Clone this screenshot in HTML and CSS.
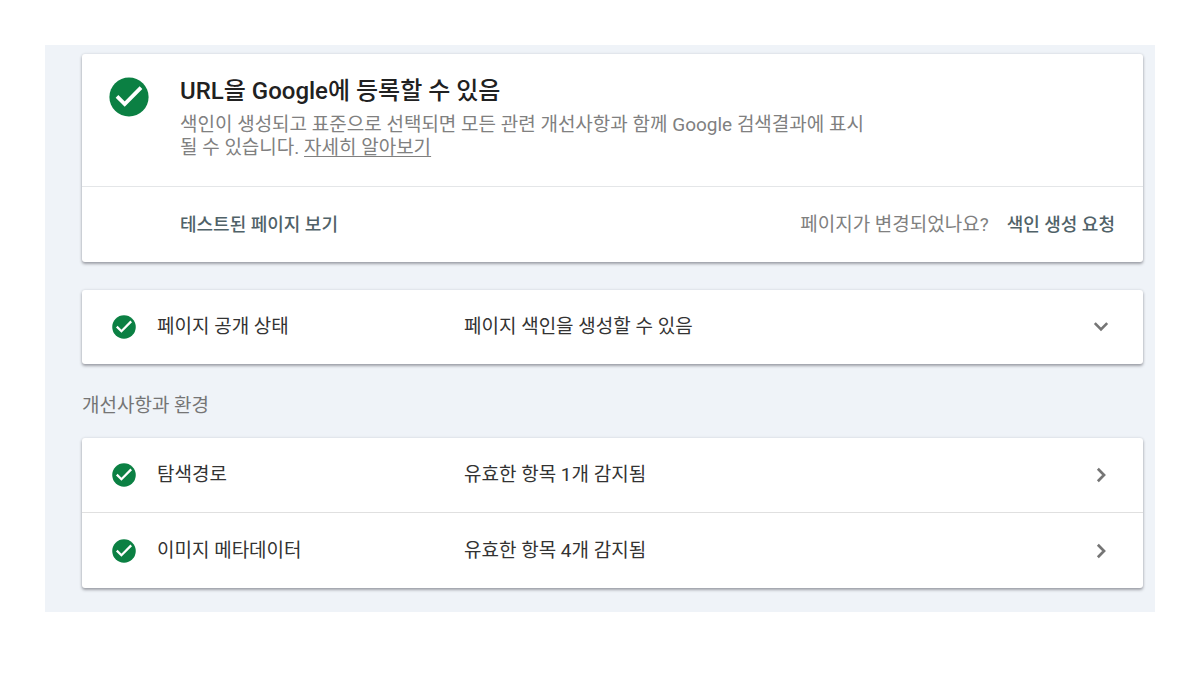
FILE: index.html
```html
<!DOCTYPE html>
<html lang="ko">
<head>
<meta charset="utf-8">
<meta name="viewport" content="width=device-width, initial-scale=1">
<title>URL 검사</title>
<link rel="stylesheet" href="styles.css">
</head>
<body>
<svg class="defs" aria-hidden="true">
  <symbol id="check" viewBox="2 2 20 20"><circle cx="12" cy="12" r="9.8" fill="#0b8043"/><path d="M6 11.700L9.850 15.500 18 7.300" fill="none" stroke="#fff" stroke-width="1.900"/></symbol>
  <symbol id="right" viewBox="0 0 24 24"><path d="M9.300 6.700L14.600 12 9.300 17.300" fill="none" stroke="#757575" stroke-width="2.300"/></symbol>
  <symbol id="down" viewBox="0 0 24 24"><path d="M6.700 8.700L12 14 17.300 8.700" fill="none" stroke="#757575" stroke-width="2.300"/></symbol>
</svg>
<main class="panel">
  <section class="card">
    <div class="verdict">
      <svg class="check check-large" aria-hidden="true"><use href="#check"/></svg>
      <div>
        <h1 class="title">URL을 Google에 등록할 수 있음</h1>
        <p class="description">색인이 생성되고 표준으로 선택되면 모든 관련 개선사항과 함께 Google 검색결과에 표시될 수 있습니다. <a class="more" href="#">자세히 알아보기</a></p>
      </div>
    </div>
    <div class="actions">
      <button class="action" type="button">테스트된 페이지 보기</button>
      <div class="request">
        <span>페이지가 변경되었나요?</span>
        <button class="action" type="button">색인 생성 요청</button>
      </div>
    </div>
  </section>
  <section class="card status">
    <button class="row" type="button">
      <svg class="check" aria-hidden="true"><use href="#check"/></svg>
      <span>페이지 공개 상태</span>
      <span>페이지 색인을 생성할 수 있음</span>
      <svg class="chevron" aria-hidden="true"><use href="#down"/></svg>
    </button>
  </section>
  <h2 class="group">개선사항과 환경</h2>
  <section class="card">
    <button class="row" type="button">
      <svg class="check" aria-hidden="true"><use href="#check"/></svg>
      <span>탐색경로</span>
      <span>유효한 항목 1개 감지됨</span>
      <svg class="chevron" aria-hidden="true"><use href="#right"/></svg>
    </button>
    <button class="row" type="button">
      <svg class="check" aria-hidden="true"><use href="#check"/></svg>
      <span>이미지 메타데이터</span>
      <span>유효한 항목 4개 감지됨</span>
      <svg class="chevron" aria-hidden="true"><use href="#right"/></svg>
    </button>
  </section>
</main>
</body>
</html>
```
FILE: styles.css
```css
* { box-sizing: border-box; }
body {
  margin: 0;
  padding: 45px;
  background: #fff;
  color: #333;
  font: 19px/24px Roboto, "Noto Sans CJK KR", sans-serif;
}
.defs { position: absolute; width: 0; height: 0; }
.panel { padding: 9px 12px 24px 37px; background: #eff3f8; }
.card {
  background: #fff;
  border-radius: 3px;
  box-shadow: 0 2px 3px rgba(40, 40, 50, .38), 0 0 3px rgba(40, 40, 50, .12);
}
.verdict {
  display: grid;
  grid-template-columns: 71px minmax(0, 688px);
  padding: 21px 27px 27px;
  border-bottom: 1px solid #e4e6e8;
}
.check { width: 24px; height: 24px; }
.check-large { width: 40px; height: 40px; margin-top: 2px; }
.title { margin: 0 0 6px; color: #212121; font-size: 24px; font-weight: 500; line-height: 32px; }
.description { margin: 0; color: #808080; line-height: 23px; word-break: break-all; }
.more { color: inherit; text-underline-offset: 2px; }
.actions {
  display: flex;
  justify-content: space-between;
  align-items: center;
  padding: 26px 28px 25px 98px;
}
.request { display: flex; gap: 18px; color: #808080; }
button { border: 0; background: none; color: inherit; font: inherit; cursor: pointer; }
.action { padding: 0; color: #506268; font-size: 18px; font-weight: 500; }
.status { margin-top: 28px; }
.row {
  display: grid;
  grid-template-columns: 45px 307px 1fr 28px;
  align-items: center;
  width: 100%;
  height: 74px;
  padding: 0 28px 0 30px;
  text-align: left;
}
.row + .row { height: 76px; border-top: 1px solid #e0e0e0; }
.chevron { width: 28px; height: 28px; }
.group { margin: 30px 0 20px; color: #757575; font-size: 19px; font-weight: 400; line-height: 24px; }
```
